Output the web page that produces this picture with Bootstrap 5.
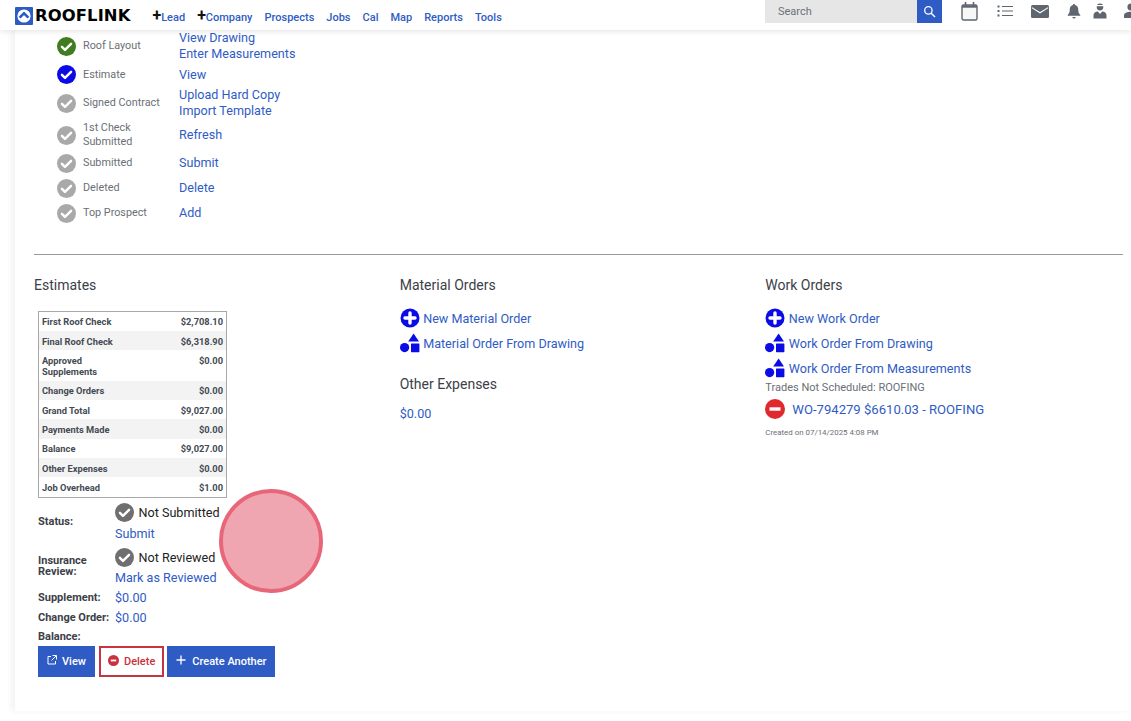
<!DOCTYPE html>
<html lang="en">
<head>
    <meta charset="UTF-8">
    <title>Rooflink Job</title>
    <link href="https://cdn.jsdelivr.net/npm/bootstrap@5.3.3/dist/css/bootstrap.min.css" rel="stylesheet">
    <style>
        html, body { height: 100%; overflow: hidden; }
        body { background: #fff; font-family: Roboto, "Liberation Sans", sans-serif; color: #3c4148; font-size: 12px; }
        a { color: #2f5cc4; text-decoration: none; }

        .top-bar { height: 30px; padding: 0; background: #fff; box-shadow: 0 1px 6px rgba(0,0,0,.12); position: relative; z-index: 2; align-items: flex-start; flex-wrap: nowrap; }
        .brand-box { margin-left: 15px; margin-top: 7px; display: flex; align-items: center; text-decoration: none; }
        .brand-mark { width: 18px; height: 18px; display: block; }
        .brand-word { font-family: "DejaVu Sans", sans-serif; font-weight: 700; font-size: 16.4px; letter-spacing: .1px; color: #000; line-height: 18px; margin-left: 2px; }
        .top-links { margin-left: 22px; margin-top: 11px; gap: 12px; font-size: 11px; font-weight: 500; line-height: 14px; white-space: nowrap; }
        .top-links .plus { color: #111; font-size: 16px; font-weight: 700; line-height: 0; }
        .search-box { margin-left: auto; width: 177px; height: 23px; display: flex; }
        .search-field { flex: 1; background: #e6e6e6; color: #6c727a; font-size: 11px; line-height: 23px; padding-left: 13px; }
        .search-btn { width: 25px; background: #2f5cc4; display: flex; align-items: center; justify-content: center; }
        .top-icons { width: 189px; padding-left: 19px; height: 22px; align-items: center; overflow: hidden; }
        .top-icons svg { display: block; flex: none; }
        .gap-list { margin-left: 19px; }
        .gap-mail { margin-left: 18px; }
        .gap-bell { margin-left: 18px; }
        .gap-tie { margin-left: 12px; }
        .gap-user { margin-left: 17px; }

        .page-main { margin-left: 15px; padding: 0 8px 0 19px; height: 681px; box-shadow: -4px 0 6px rgba(0,0,0,.05); background: #fff; }

        .step-row { display: flex; align-items: center; min-height: 25px; padding-left: 23px; }
        .step-row.step-tall { min-height: 32px; }
        .step-row.step-mid { min-height: 31px; }
        .step-row.step-short { min-height: 24px; }
        .step-icon { width: 19px; height: 19px; flex: none; display: block; }
        .tint-green { color: #3f7d1f; }
        .tint-blue { color: #0b0be6; }
        .tint-grey { color: #a9a9a9; }
        .tint-dark { color: #6f6f6f; }
        .step-label { width: 96px; flex: none; margin-left: 7px; font-size: 10.8px; line-height: 14px; color: #6a6f76; }
        .step-links { font-size: 12.6px; line-height: 16.4px; }
        .step-links a { display: block; }

        .split-line { margin: 28px 0 20px; border: 0; border-top: 1px solid #9a9a9a; opacity: 1; }
        .block-title { font-size: 14px; line-height: 20px; color: #3c4148; margin: 0; font-weight: 400; }

        .sum-wrap { width: 189px; margin: 16px 0 0 4px; border: 1px solid #a8a8a8; }
        .sum-table { margin: 0; }
        .sum-table td { font-size: 9.3px; line-height: 11.2px; font-weight: 700; color: #444a52; padding: 4.6px 3px 3.5px 3px; border: 0; vertical-align: top; }
        .sum-table tr:nth-child(even) td { background: #f3f3f3; }
        .sum-table td:last-child { text-align: right; white-space: nowrap; }

        .info-row { display: flex; margin-left: 4px; }
        .info-name { width: 77px; flex: none; font-size: 11px; font-weight: 700; line-height: 11px; color: #3c4148; white-space: nowrap; }
        .info-lift { padding-bottom: 3px; }
        .info-val { font-size: 12.6px; line-height: 20px; }
        .info-state { display: flex; align-items: center; gap: 4.5px; color: #222; line-height: 20px; margin-bottom: 1px; }
        .info-state.state-flush { margin-bottom: 0; }
        .info-state svg { width: 19px; height: 19px; display: block; }
        .info-first { margin-top: 5px; }
        .info-tight { min-height: 17px; }

        .act-row { margin: 1px 0 0 4px; }
        .act-btn { height: 31px; border-radius: 0; font-size: 11px; font-weight: 500; display: flex; align-items: center; }
        .act-btn svg { flex: none; margin-bottom: 4px; }
        .act-view { padding: 2px 8px 0; gap: 5px; margin-right: 4px; }
        .act-del { padding: 2px 7px 0; gap: 5px; margin-right: 3px; }
        .act-new { padding: 2px 7px 0 8px; gap: 6px; }
        .act-primary { background: #2f5cc4; border: 1px solid #2f5cc4; color: #fff; }
        .act-danger { background: #fff; border: 2px solid #c9323f; color: #c9323f; }

        .order-top { margin-top: 11px; }
        .order-link { display: flex; align-items: center; font-size: 12.6px; line-height: 25px; height: 25px; }
        .order-link svg { width: 20px; height: 20px; flex: none; margin-right: 3.5px; }
        .order-link svg.order-wo-icon { margin-right: 7px; }
        .order-wo { font-size: 13.1px; margin-top: 3px; }
        .order-note { font-size: 11px; line-height: 12px; color: #6a6f76; margin-top: 1px; }
        .order-small { font-size: 7.9px; line-height: 10px; color: #6a6f76; margin-top: 6px; }
        .other-title { margin-top: 18px; }
        .other-val { margin-top: 7px; }

        .work-cols { margin-right: -8px; }
        .touch-dot { position: absolute; left: 219px; top: 489px; width: 104px; height: 104px; border-radius: 50%; background: #f0a6b0; border: 4px solid #e8667a; z-index: 3; }
    </style>
</head>
<body>

<svg class="d-none">
    <defs>
        <symbol id="ic-check" viewBox="0 0 20 20">
            <circle cx="10" cy="10" r="10" fill="currentColor"/>
            <path d="M5.2 10.4 8.4 13.6 14.8 7.2" fill="none" stroke="#fff" stroke-width="2.6" stroke-linecap="round" stroke-linejoin="round"/>
        </symbol>
        <symbol id="ic-plus" viewBox="0 0 20 20">
            <circle cx="10" cy="10" r="9.5" fill="#0b0be6"/>
            <path d="M5 10h10M10 5v10" stroke="#fff" stroke-width="3.4" stroke-linecap="round"/>
        </symbol>
        <symbol id="ic-shapes" viewBox="0 0 20 20">
            <path d="M13.6 0.5 19 8.5H8.2z" fill="#0b0be6"/>
            <circle cx="4.6" cy="14.6" r="4.6" fill="#0b0be6"/>
            <rect x="11" y="10.4" width="8.4" height="8.8" rx=".6" fill="#0b0be6"/>
        </symbol>
    </defs>
</svg>

<nav class="navbar top-bar">
    <a class="brand-box" href="#">
        <svg class="brand-mark" viewBox="0 0 18 18">
            <rect width="18" height="18" rx="1" fill="#2f5cc4"/>
            <circle cx="9" cy="9" r="6.6" fill="#fff"/>
            <path d="M4.6 10.6 9 6.4l4.4 4.2" fill="none" stroke="#2f5cc4" stroke-width="2.6"/>
        </svg>
        <span class="brand-word">ROOFLINK</span>
    </a>
    <div class="d-flex top-links">
        <a href="#"><span class="plus">+</span>Lead</a>
        <a href="#"><span class="plus">+</span>Company</a>
        <a href="#">Prospects</a>
        <a href="#">Jobs</a>
        <a href="#">Cal</a>
        <a href="#">Map</a>
        <a href="#">Reports</a>
        <a href="#">Tools</a>
    </div>
    <div class="search-box">
        <div class="search-field">Search</div>
        <a class="search-btn" href="#">
            <svg width="13" height="13" viewBox="0 0 13 13"><circle cx="5.4" cy="5.4" r="3.7" fill="none" stroke="#fff" stroke-width="1.3"/><path d="M8.2 8.2 12 12" stroke="#fff" stroke-width="1.4"/></svg>
        </a>
    </div>
    <div class="d-flex top-icons">
        <svg width="17" height="19" viewBox="0 0 17 19"><rect x="1" y="3" width="15" height="15" rx="1.5" fill="#f7f7f7" stroke="#5f6670" stroke-width="1.4"/><path d="M1 4.500h15" stroke="#5f6670" stroke-width="2.400"/><path d="M4.500 0v4M12.500 0v4" stroke="#5f6670" stroke-width="1.600"/></svg>
        <svg class="gap-list" width="16" height="12" viewBox="0 0 16 12"><path d="M5 1.500h11M5 6h11M5 10.500h11" stroke="#5f6670" stroke-width="1.200"/><path d="M.5 1.500h2.500M.5 6h2.500M.5 10.500h2.500" stroke="#5f6670" stroke-width="2" stroke-dasharray="2 .5"/></svg>
        <svg class="gap-mail" width="18" height="13" viewBox="0 0 18 13"><rect width="18" height="13" rx="1.600" fill="#5f6670"/><path d="M0.800 2.600 9 7.800l8.200-5.200" fill="none" stroke="#fff" stroke-width="1.100"/></svg>
        <svg class="gap-bell" width="14" height="16" viewBox="0 0 14 16"><path d="M7 1c-.7 0-1.100.5-1.100 1.100C3.600 2.700 2.700 4.500 2.700 7c0 2.600-.7 3.800-2 5v.8h12.600V12c-1.300-1.200-2-2.400-2-5 0-2.500-.9-4.300-3.200-4.900C8.100 1.500 7.700 1 7 1z" fill="#5f6670"/><path d="M5.400 14a1.600 1.600 0 0 0 3.200 0z" fill="#5f6670"/></svg>
        <svg class="gap-tie" width="14" height="16" viewBox="0 0 14 16"><ellipse cx="7" cy="4" rx="3.300" ry="3.400" fill="#5f6670"/><path d="M2.800 2.600h8.400" stroke="#fff" stroke-width="1.200"/><path d="M0.500 15.500v-3.200C.5 10 2.500 8.700 4.800 8.500L7 11l2.200-2.500c2.300.2 4.300 1.500 4.300 3.800v3.200z" fill="#5f6670"/></svg>
        <svg class="gap-user" width="14" height="16" viewBox="0 0 14 16"><circle cx="7" cy="4" r="3.600" fill="#5f6670"/><path d="M0 15v-2.500C0 10 3 8.800 7 8.800s7 1.200 7 3.700V15z" fill="#5f6670"/></svg>
    </div>
</nav>

<main class="page-main">
    <section>
        <div class="step-row step-tall">
            <svg class="step-icon tint-green"><use href="#ic-check"/></svg>
            <div class="step-label">Roof Layout</div>
            <div class="step-links"><a href="#">View Drawing</a><a href="#">Enter Measurements</a></div>
        </div>
        <div class="step-row step-short">
            <svg class="step-icon tint-blue"><use href="#ic-check"/></svg>
            <div class="step-label">Estimate</div>
            <div class="step-links"><a href="#">View</a></div>
        </div>
        <div class="step-row step-tall">
            <svg class="step-icon tint-grey"><use href="#ic-check"/></svg>
            <div class="step-label">Signed Contract</div>
            <div class="step-links"><a href="#">Upload Hard Copy</a><a href="#">Import Template</a></div>
        </div>
        <div class="step-row step-mid">
            <svg class="step-icon tint-grey"><use href="#ic-check"/></svg>
            <div class="step-label">1st Check<br>Submitted</div>
            <div class="step-links"><a href="#">Refresh</a></div>
        </div>
        <div class="step-row">
            <svg class="step-icon tint-grey"><use href="#ic-check"/></svg>
            <div class="step-label">Submitted</div>
            <div class="step-links"><a href="#">Submit</a></div>
        </div>
        <div class="step-row">
            <svg class="step-icon tint-grey"><use href="#ic-check"/></svg>
            <div class="step-label">Deleted</div>
            <div class="step-links"><a href="#">Delete</a></div>
        </div>
        <div class="step-row">
            <svg class="step-icon tint-grey"><use href="#ic-check"/></svg>
            <div class="step-label">Top Prospect</div>
            <div class="step-links"><a href="#">Add</a></div>
        </div>
    </section>

    <hr class="split-line">

    <div class="row g-0 work-cols">
        <div class="col-4">
            <h5 class="block-title">Estimates</h5>
            <div class="sum-wrap">
                <table class="table sum-table">
                    <tbody>
                        <tr><td>First Roof Check</td><td>$2,708.10</td></tr>
                        <tr><td>Final Roof Check</td><td>$6,318.90</td></tr>
                        <tr><td>Approved<br>Supplements</td><td>$0.00</td></tr>
                        <tr><td>Change Orders</td><td>$0.00</td></tr>
                        <tr><td>Grand Total</td><td>$9,027.00</td></tr>
                        <tr><td>Payments Made</td><td>$0.00</td></tr>
                        <tr><td>Balance</td><td>$9,027.00</td></tr>
                        <tr><td>Other Expenses</td><td>$0.00</td></tr>
                        <tr><td>Job Overhead</td><td>$1.00</td></tr>
                    </tbody>
                </table>
            </div>
            <div class="info-row align-items-center info-first">
                <div class="info-name info-lift">Status:</div>
                <div class="info-val">
                    <div class="info-state"><svg class="tint-dark"><use href="#ic-check"/></svg>Not Submitted</div>
                    <a href="#">Submit</a>
                </div>
            </div>
            <div class="info-row align-items-center mt-1">
                <div class="info-name info-lift">Insurance<br>Review:</div>
                <div class="info-val">
                    <div class="info-state state-flush"><svg class="tint-dark"><use href="#ic-check"/></svg>Not Reviewed</div>
                    <a href="#">Mark as Reviewed</a>
                </div>
            </div>
            <div class="info-row align-items-center"><div class="info-name">Supplement:</div><div class="info-val"><a href="#">$0.00</a></div></div>
            <div class="info-row align-items-center"><div class="info-name">Change Order:</div><div class="info-val"><a href="#">$0.00</a></div></div>
            <div class="info-row align-items-center info-tight"><div class="info-name">Balance:</div></div>
            <div class="d-flex act-row">
                <a class="act-btn act-primary act-view" href="#">
                    <svg width="10" height="10" viewBox="0 0 10 10"><path d="M4 1.500H1v7.500h7.500V6" fill="none" stroke="#fff"/><path d="M5.500 .5h4v4M9 1 4.500 5.500" fill="none" stroke="#fff"/></svg>View</a>
                <a class="act-btn act-danger act-del" href="#">
                    <svg width="11" height="11" viewBox="0 0 11 11"><circle cx="5.500" cy="5.500" r="5.500" fill="#c9323f"/><path d="M2.800 5.500h5.400" stroke="#fff" stroke-width="1.800"/></svg>Delete</a>
                <a class="act-btn act-primary act-new" href="#">
                    <svg width="10" height="10" viewBox="0 0 10 10"><path d="M5 .5v9M.5 5h9" stroke="#fff" stroke-width="1.300"/></svg>Create Another</a>
            </div>
        </div>
        <div class="col-4">
            <h5 class="block-title">Material Orders</h5>
            <div class="order-top">
                <a class="order-link" href="#"><svg><use href="#ic-plus"/></svg>New Material Order</a>
                <a class="order-link" href="#"><svg><use href="#ic-shapes"/></svg>Material Order From Drawing</a>
            </div>
            <h5 class="block-title other-title">Other Expenses</h5>
            <div class="order-link other-val"><a href="#">$0.00</a></div>
        </div>
        <div class="col-4">
            <h5 class="block-title">Work Orders</h5>
            <div class="order-top">
                <a class="order-link" href="#"><svg><use href="#ic-plus"/></svg>New Work Order</a>
                <a class="order-link" href="#"><svg><use href="#ic-shapes"/></svg>Work Order From Drawing</a>
                <a class="order-link" href="#"><svg><use href="#ic-shapes"/></svg>Work Order From Measurements</a>
                <div class="order-note">Trades Not Scheduled: ROOFING</div>
                <a class="order-link order-wo" href="#">
                    <svg class="order-wo-icon" viewBox="0 0 20 20"><circle cx="10" cy="10" r="10" fill="#e0282e"/><path d="M4.500 10h11" stroke="#fff" stroke-width="3.400"/></svg>WO-794279 $6610.03 - ROOFING</a>
                <div class="order-small">Created on 07/14/2025 4:08 PM</div>
            </div>
        </div>
    </div>
</main>

<div class="touch-dot"></div>

<script src="https://cdn.jsdelivr.net/npm/bootstrap@5.3.3/dist/js/bootstrap.bundle.min.js"></script>
</body>
</html>
